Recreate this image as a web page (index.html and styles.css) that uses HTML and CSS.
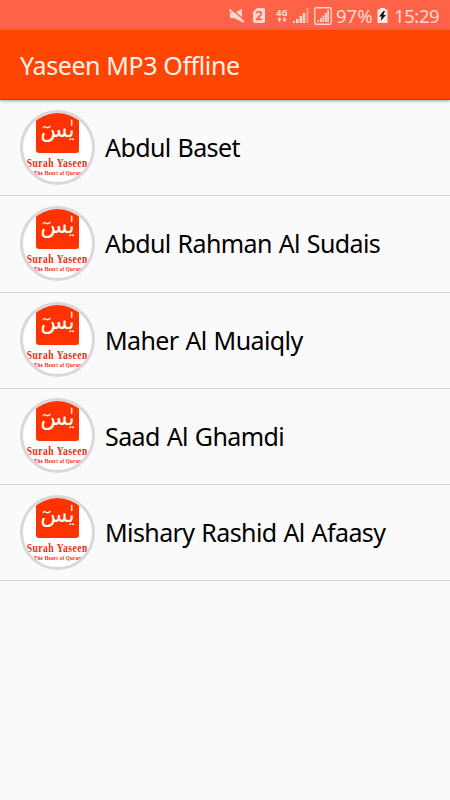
FILE: index.html
```html
<!DOCTYPE html>
<html lang="en">
<head>
  <meta charset="UTF-8" />
  <meta name="viewport" content="width=device-width, initial-scale=1.0" />
  <title>Yaseen MP3 Offline</title>
  <link rel="stylesheet" href="styles.css">
</head>
<body>
  <div class="status-bar">
    <svg class="mute" width="16" height="16" viewBox="0 0 16 16">
      <path d="M1 5h4l8-4v13L5 10H1z" fill="currentColor"/>
      <path d="M1 0l15 12.500" stroke="#ff6347" stroke-width="1.500"/>
      <path d="M0 1.500l15 12.500" stroke="currentColor" stroke-width="2"/>
    </svg>
    <svg class="sim" width="12" height="15" viewBox="0 0 12 15">
      <path d="M4 0h7l1 1v13l-1 1H1l-1-1V4z" fill="currentColor"/>
      <path d="M3.500 5.300C3.800 3.300 8.300 3.300 8.300 5.600C8.300 7.500 5 9 3.800 11.300H9" fill="none" stroke="#ff6347" stroke-width="1.700"/>
    </svg>
    <div class="network">
      <span>4G</span>
      <svg width="10" height="6" viewBox="0 0 10 6">
        <path d="M2.500 0L5 2.500H3.200V5H1.800V2.500H0zM6.800 0h1.400v2.500H10L7.500 5 5 2.500h1.800z" fill="currentColor"/>
      </svg>
    </div>
    <svg class="signal" width="16" height="15" viewBox="0 0 16 15">
      <path d="M0 13h2v2H0zM3 11h2.500v4H3zM6.500 8H9v7H6.500zM9.700 5h2.500v10H9.700z" fill="currentColor"/>
      <path d="M13 0h2.500v15H13z" fill="currentColor" opacity=".4"/>
    </svg>
    <svg class="signal-box" width="18" height="18" viewBox="0 0 18 18">
      <rect x=".75" y=".75" width="16.500" height="16.500" rx="1.500" fill="none" stroke="currentColor" stroke-width="1.300"/>
      <path d="M3.500 13h1.500v2H3.500zM6 11h1.800v4H6zM8.500 8.500h1.800V15H8.500zM11 6h1.800v9H11zM13.300 3H15v12h-1.700z" fill="currentColor"/>
    </svg>
    <span class="percent">97%</span>
    <svg class="battery" width="11" height="15" viewBox="0 0 11 15">
      <path d="M3 0h5v1.500h2.500V15H.5V1.500H3z" fill="currentColor"/>
      <path d="M6.500 3L2 8.500h2.600L3.700 13 9 7H6.300L8 3z" fill="#111"/>
    </svg>
    <span class="clock">15:29</span>
  </div>

  <header class="app-bar">
    <h1>Yaseen MP3 Offline</h1>
  </header>

  <ul class="reciters">
    <li class="reciter">
      <div class="logo">
        <div class="logo-mark" lang="ar">يٰسٓ</div>
        <div class="logo-title">Surah Yaseen</div>
        <div class="logo-tagline">The Heart of Quran</div>
      </div>
      <span class="name">Abdul Baset</span>
    </li>
    <li class="reciter">
      <div class="logo">
        <div class="logo-mark" lang="ar">يٰسٓ</div>
        <div class="logo-title">Surah Yaseen</div>
        <div class="logo-tagline">The Heart of Quran</div>
      </div>
      <span class="name">Abdul Rahman Al Sudais</span>
    </li>
    <li class="reciter">
      <div class="logo">
        <div class="logo-mark" lang="ar">يٰسٓ</div>
        <div class="logo-title">Surah Yaseen</div>
        <div class="logo-tagline">The Heart of Quran</div>
      </div>
      <span class="name">Maher Al Muaiqly</span>
    </li>
    <li class="reciter">
      <div class="logo">
        <div class="logo-mark" lang="ar">يٰسٓ</div>
        <div class="logo-title">Surah Yaseen</div>
        <div class="logo-tagline">The Heart of Quran</div>
      </div>
      <span class="name">Saad Al Ghamdi</span>
    </li>
    <li class="reciter">
      <div class="logo">
        <div class="logo-mark" lang="ar">يٰسٓ</div>
        <div class="logo-title">Surah Yaseen</div>
        <div class="logo-tagline">The Heart of Quran</div>
      </div>
      <span class="name">Mishary Rashid Al Afaasy</span>
    </li>
  </ul>
</body>
</html>
```
FILE: styles.css
```css
* {
  box-sizing: border-box;
}
body {
  margin: 0;
  min-height: 100vh;
  background: #fafafa;
  color: #000;
  font-family: "Noto Sans", "Open Sans", sans-serif;
}
.status-bar {
  display: flex;
  align-items: center;
  justify-content: flex-end;
  height: 30px;
  padding: 1px 10px 0 0;
  background: #ff6347;
  color: #ffd8d1;
  font-size: 18.5px;
  line-height: 28px;
}
.status-bar svg {
  display: block;
  flex: none;
}
.mute {
  margin-right: 8px;
}
.sim {
  margin-right: 10px;
}
.network {
  display: flex;
  flex-direction: column;
  align-items: center;
  width: 14px;
  margin-right: 4px;
  font-size: 9px;
  font-weight: 700;
  line-height: 9px;
}
.signal {
  margin-right: 5px;
}
.signal-box {
  margin-right: 4px;
}
.percent {
  width: 39px;
  margin-right: 2px;
}
.battery {
  margin-right: 6px;
  color: #ffe9e4;
}
.clock {
  width: 46px;
  letter-spacing: -0.4px;
}
.app-bar {
  position: relative;
  display: flex;
  align-items: center;
  height: 70px;
  padding: 1px 20px 0;
  background: #ff4500;
  border-bottom: 1px solid #f32800;
  box-shadow: 0 1px 3px rgba(0, 70, 80, 0.45);
}
.app-bar h1 {
  margin: 0;
  color: #fff2ee;
  font-size: 25px;
  font-weight: 400;
  line-height: 34px;
  letter-spacing: -0.4px;
}
.reciters {
  margin: 0;
  padding: 0;
  list-style: none;
}
.reciter {
  display: flex;
  align-items: center;
  gap: 10px;
  height: 96.25px;
  padding: 0 20px 1px;
  border-bottom: 1px solid #d4d4d4;
}
.logo {
  display: flex;
  flex-direction: column;
  align-items: center;
  flex: none;
  width: 75px;
  height: 75px;
  overflow: hidden;
  border: 3px solid #d8d8d8;
  border-radius: 50%;
  background: #fff;
  color: #f32a0a;
  font-family: "Liberation Serif", serif;
  font-weight: 700;
  white-space: nowrap;
}
.logo-mark {
  width: 43px;
  height: 40px;
  padding-top: 3px;
  border-radius: 0 0 3px 3px;
  background: #ff3300;
  color: #fff;
  font-family: "DejaVu Sans", sans-serif;
  font-size: 22px;
  font-weight: 400;
  line-height: 28px;
  text-align: center;
}
.logo-title {
  margin-top: 3px;
  font-size: 12px;
  line-height: 14px;
  letter-spacing: 0.6px;
  transform: scaleX(0.8);
}
.logo-tagline {
  font-size: 6px;
  line-height: 7px;
  letter-spacing: 0.2px;
  transform: scaleX(0.86);
}
.name {
  font-size: 25px;
  line-height: 34px;
  letter-spacing: -0.6px;
  word-spacing: 1px;
  white-space: nowrap;
}
```
